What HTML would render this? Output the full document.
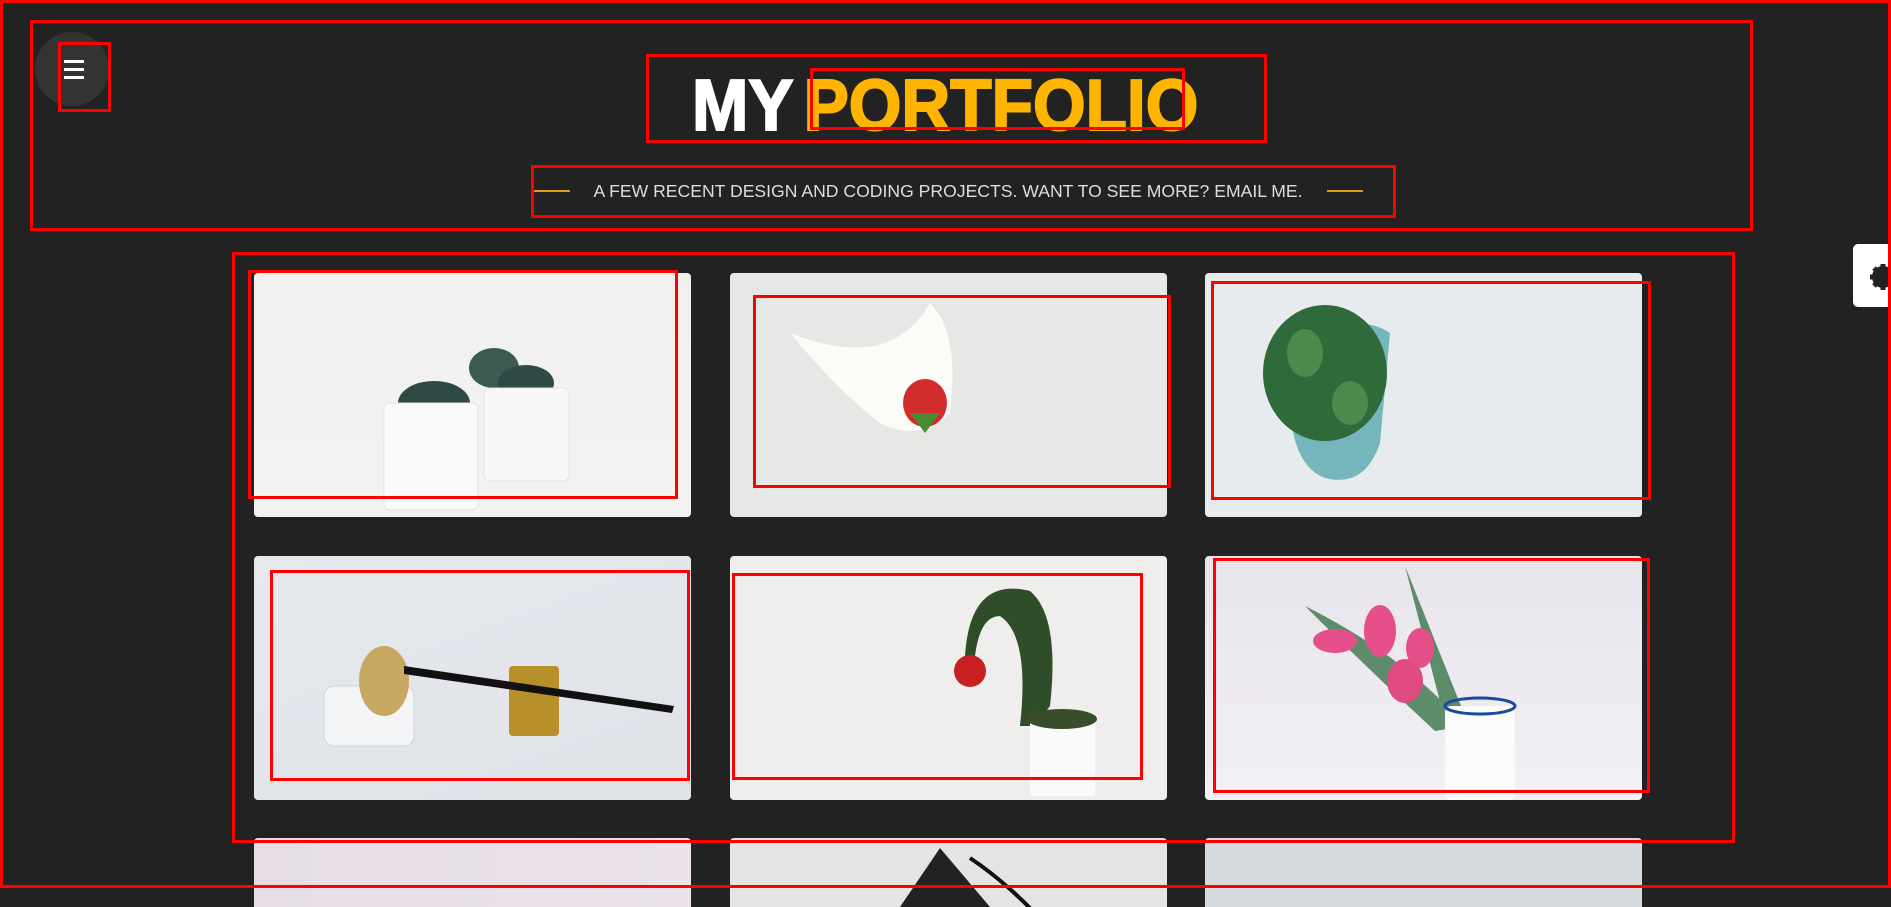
<!DOCTYPE html>
<html><head><meta charset="utf-8">
<style>
*{margin:0;padding:0;box-sizing:border-box}
html,body{width:1891px;height:907px;overflow:hidden;background:#222222;font-family:"Liberation Sans",sans-serif}
#w{position:relative;width:1891px;height:907px;overflow:hidden;background:#222}
.a{position:absolute}
.rb{position:absolute;border:3px solid #ff0000}
.card{position:absolute;width:437px;height:244px;border-radius:4px;overflow:hidden}
.card svg{position:absolute;left:0;top:0}
</style></head><body><div id="w">
<!-- hamburger -->
<div class="a" style="left:35px;top:32px;width:74px;height:74px;border-radius:50%;background:#333"></div>
<div class="a" style="left:64px;top:60px;width:20px;height:3px;background:#fff"></div>
<div class="a" style="left:64px;top:68px;width:20px;height:3px;background:#fff"></div>
<div class="a" style="left:64px;top:76px;width:20px;height:3px;background:#fff"></div>

<!-- title -->
<div class="a" style="left:692px;top:66px;white-space:nowrap;font-size:72px;font-weight:900;line-height:80px;word-spacing:-8px;-webkit-text-stroke:2px currentColor;transform:scaleX(0.94);transform-origin:left center"><span style="color:#fff">MY</span> <span style="color:#ffb400">PORTFOLIO</span></div>

<!-- subtitle -->
<div class="a" style="left:534px;top:190px;width:36px;height:2px;background:#d4a017"></div>
<div class="a" style="left:1327px;top:190px;width:36px;height:2px;background:#d4a017"></div>
<div class="a" style="left:570px;top:180px;width:756px;text-align:center;color:#ddd;font-size:17.6px;line-height:22px">A FEW RECENT DESIGN AND CODING PROJECTS. WANT TO SEE MORE? EMAIL ME.</div>

<!-- gear -->
<div class="a" style="left:1853px;top:244px;width:60px;height:63px;background:#fff;border-radius:5px"></div>
<svg class="a" style="left:1868px;top:262px" width="30" height="30" viewBox="0 0 30 30"><circle cx="15" cy="15" r="8" fill="none" stroke="#222" stroke-width="6"/><g stroke="#222" stroke-width="5"><line x1="15" y1="2" x2="15" y2="28"/><line x1="2" y1="15" x2="28" y2="15"/><line x1="6" y1="6" x2="24" y2="24"/><line x1="24" y1="6" x2="6" y2="24"/></g></svg>

<!-- cards row1 -->
<div class="card" style="left:254px;top:273px;background:linear-gradient(#f0f0ee,#f2f2f0)">
<svg width="437" height="244"><ellipse cx="180" cy="130" rx="36" ry="22" fill="#2f4a44"/><ellipse cx="240" cy="95" rx="25" ry="20" fill="#3c5a52"/><ellipse cx="272" cy="110" rx="28" ry="18" fill="#2f4a44"/><rect x="130" y="130" width="94" height="107" rx="6" fill="#fafafa" stroke="#e2e2e2"/><rect x="230" y="115" width="85" height="93" rx="6" fill="#f8f8f8" stroke="#e2e2e2"/></svg></div>
<div class="card" style="left:730px;top:273px;background:#e6e8e6">
<svg width="437" height="244"><path d="M60 60 Q160 100 200 30 Q230 60 220 140 Q190 170 150 150 Q110 120 60 60Z" fill="#fbfbf8"/><ellipse cx="195" cy="130" rx="22" ry="24" fill="#d22c2c"/><path d="M180 140 L195 160 L210 140Z" fill="#4a8a30"/></svg></div>
<div class="card" style="left:1205px;top:273px;background:#e8ebee">
<svg width="437" height="244"><path d="M85 100 Q80 190 120 205 Q160 215 175 170 L185 60 Q140 30 85 100Z" fill="#74b6bc"/><ellipse cx="120" cy="100" rx="62" ry="68" fill="#2f6a3a"/><ellipse cx="100" cy="80" rx="18" ry="24" fill="#4a8a4a"/><ellipse cx="145" cy="130" rx="18" ry="22" fill="#4a8a4a"/></svg></div>

<!-- row2 -->
<div class="card" style="left:254px;top:556px;background:linear-gradient(160deg,#e6e9ee,#dfe3e8)">
<svg width="437" height="244"><rect x="70" y="130" width="90" height="60" rx="10" fill="#f3f4f6" stroke="#cfd3d8"/><ellipse cx="130" cy="125" rx="25" ry="35" fill="#c8a860"/><rect x="255" y="110" width="50" height="70" rx="4" fill="#b8902a"/><path d="M150 110 L420 150 L418 157 L150 118Z" fill="#111"/></svg></div>
<div class="card" style="left:730px;top:556px;background:#efeeec">
<svg width="437" height="244"><path d="M235 100 Q240 20 300 35 Q330 60 320 150 L305 170 L290 170 Q300 80 270 60 Q250 60 245 100Z" fill="#2e4d28"/><circle cx="240" cy="115" r="16" fill="#c82020"/><rect x="300" y="160" width="65" height="80" rx="4" fill="#fafafa"/><ellipse cx="332" cy="163" rx="35" ry="10" fill="#3a4d2a"/></svg></div>
<div class="card" style="left:1205px;top:556px;background:linear-gradient(#e8e4ec,#f2f0f4)">
<svg width="437" height="244"><path d="M100 50 Q200 100 260 170 L230 175 Q160 110 100 50Z" fill="#5c8c6a"/><path d="M200 10 L260 160 L240 165Z" fill="#5c8c6a"/><ellipse cx="130" cy="85" rx="22" ry="12" fill="#e6508a"/><ellipse cx="175" cy="75" rx="16" ry="26" fill="#e6508a"/><ellipse cx="200" cy="125" rx="18" ry="22" fill="#e04c82"/><ellipse cx="215" cy="92" rx="14" ry="20" fill="#e6508a"/><rect x="240" y="150" width="70" height="94" rx="6" fill="#fbfbfb"/><ellipse cx="275" cy="150" rx="35" ry="8" fill="none" stroke="#1a4aa0" stroke-width="3"/></svg></div>

<!-- row3 -->
<div class="card" style="left:254px;top:838px;height:69px;border-radius:4px 4px 0 0;background:linear-gradient(90deg,#e6dde6,#ebe2ea)"></div>
<div class="card" style="left:730px;top:838px;height:69px;border-radius:4px 4px 0 0;background:#e4e4e2"><svg width="437" height="69"><path d="M210 10 L170 69 L260 69Z" fill="#222"/><path d="M240 20 Q270 40 300 70" stroke="#111" stroke-width="4" fill="none"/></svg></div>
<div class="card" style="left:1205px;top:838px;height:69px;border-radius:4px 4px 0 0;background:#d6dbe0"></div>

<!-- red annotation boxes -->
<div class="rb" style="left:0;top:0;width:1891px;height:888px"></div>
<div class="rb" style="left:30px;top:20px;width:1723px;height:211px"></div>
<div class="rb" style="left:58px;top:42px;width:53px;height:70px"></div>
<div class="rb" style="left:646px;top:54px;width:621px;height:89px"></div>
<div class="rb" style="left:810px;top:68px;width:375px;height:62px"></div>
<div class="rb" style="left:531px;top:165px;width:865px;height:53px"></div>
<div class="rb" style="left:232px;top:252px;width:1503px;height:591px"></div>
<div class="rb" style="left:248px;top:270px;width:430px;height:229px"></div>
<div class="rb" style="left:753px;top:295px;width:418px;height:193px"></div>
<div class="rb" style="left:1211px;top:281px;width:440px;height:219px"></div>
<div class="rb" style="left:270px;top:570px;width:420px;height:211px"></div>
<div class="rb" style="left:732px;top:573px;width:411px;height:207px"></div>
<div class="rb" style="left:1213px;top:558px;width:437px;height:235px"></div>
</div></body></html>
